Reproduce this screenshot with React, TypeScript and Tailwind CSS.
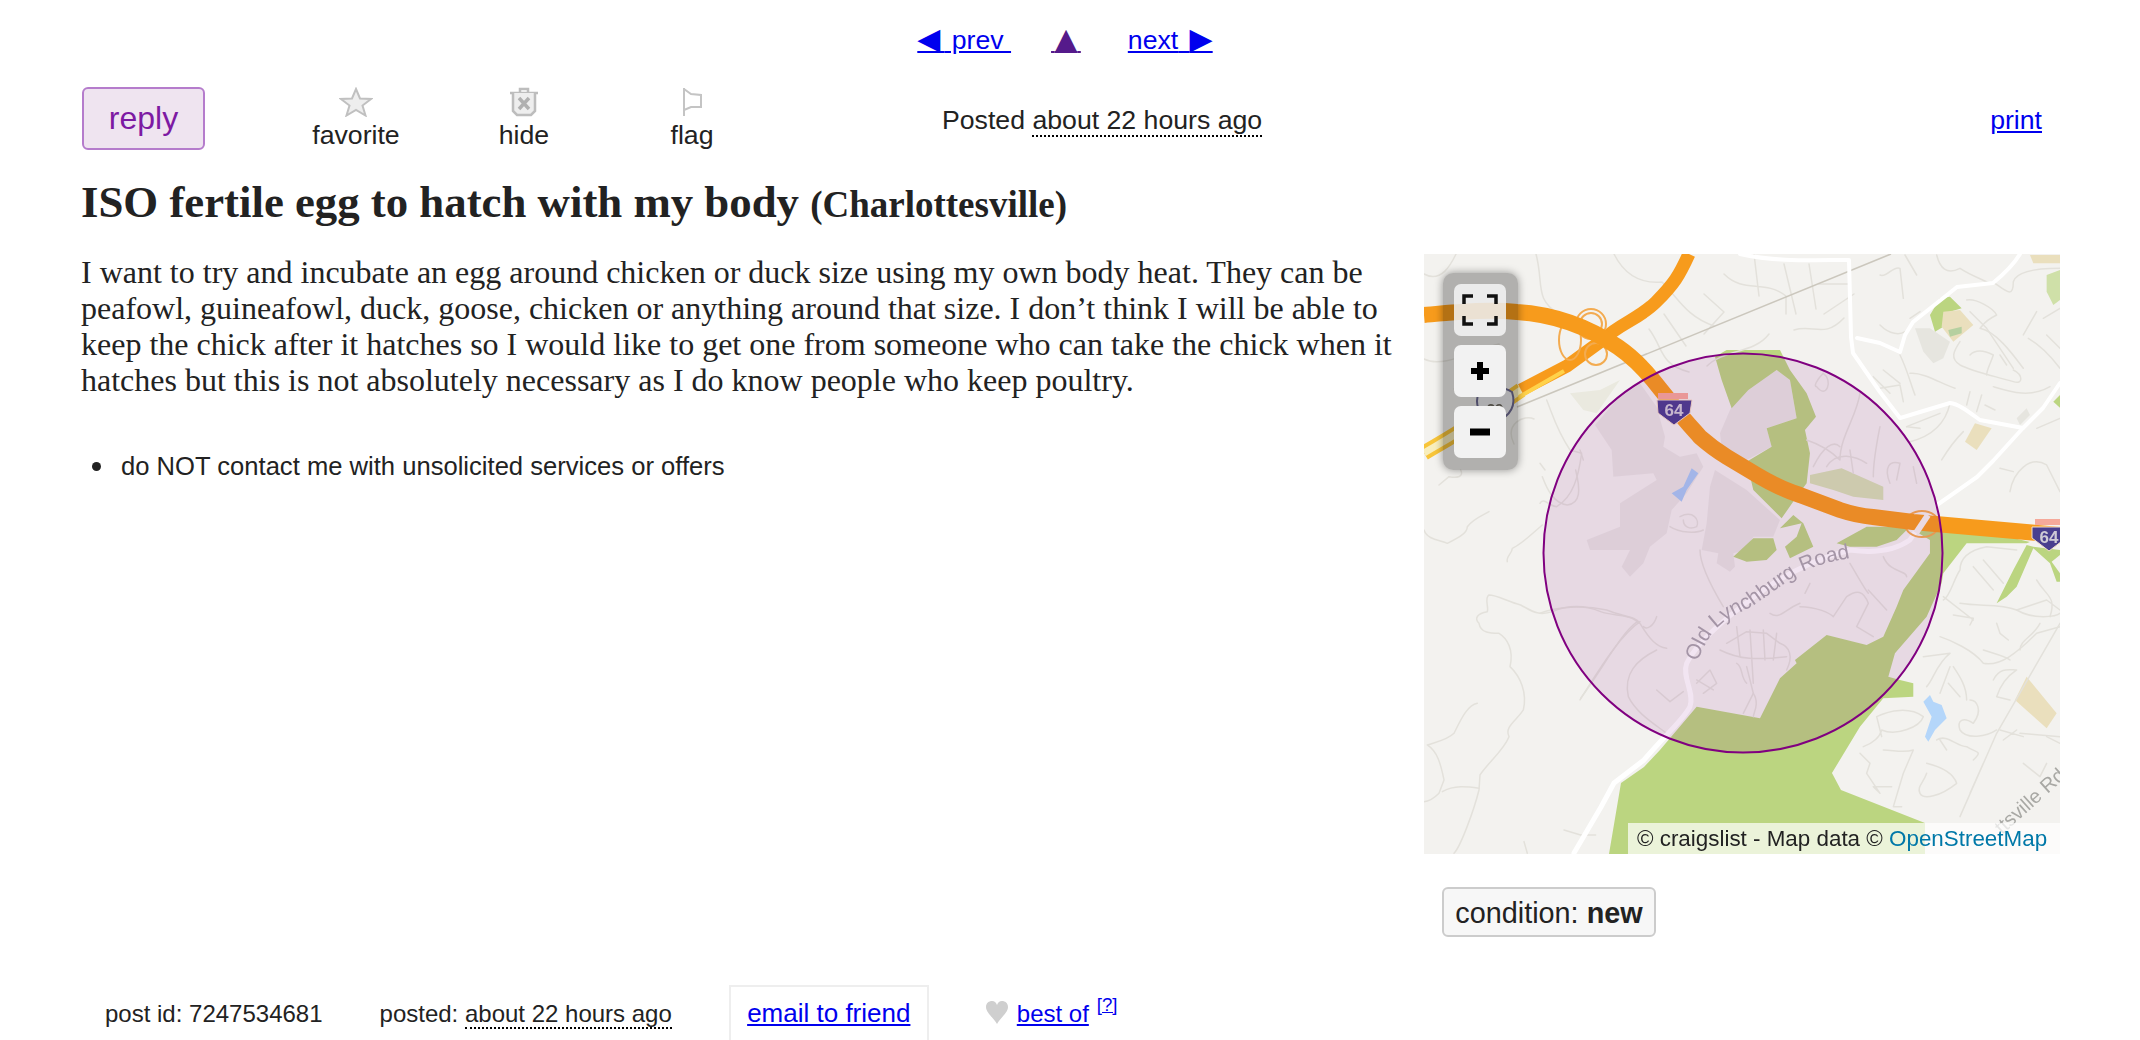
// map drawing: each block of points is traced at 3x, so the groups scale back down by a third
const roadsCentre = [
  'M0 790 C50 770 130 765 200 780 C250 800 290 800 300 820 C330 870 350 890 380 895',
  'M300 815 C250 850 200 920 120 1050',
  'M350 900 C290 930 250 970 265 1040 C290 1090 340 1120 380 1150',
  'M350 1020 L390 1055 L430 1025',
  'M350 800 C340 830 320 840 310 830',
  'M480 600 C480 650 520 720 550 770',
  'M560 880 L620 845 L680 850 L720 880 C750 890 760 920 740 960',
  'M540 900 C600 930 650 930 740 920 M590 830 L600 920 M630 840 L640 1000 M670 840 L675 930 M710 850 L700 930 M620 950 L640 1030 L610 1090 M590 940 C610 950 600 980 620 1000',
  'M470 1000 L510 960 L530 1000 L490 1030 M520 1020 L470 990',
  'M640 1030 C660 1060 640 1090 640 1100',
  'M780 770 C830 770 870 790 880 800 L920 740 C950 720 970 720 985 760 L950 830 L1000 860 M985 720 L1040 780',
  'M930 640 C960 690 970 710 985 730',
  'M690 790 C720 810 730 780 780 760 M810 700 L795 730',
  'M1030 620 C1050 670 1100 660 1100 680',
  'M830 110 C860 150 880 90 850 70 C830 90 820 110 830 110',
  'M960 130 C950 200 900 260 900 330 C870 300 830 280 800 270',
  'M860 350 C890 300 950 320 980 340',
  'M1020 230 C1010 280 1000 340 1000 380',
  'M1050 400 C1030 350 1050 330 1080 340 L1070 390',
  'M1120 350 L1130 400 M940 370 L930 300',
  'M820 350 C850 290 880 270 900 290',
  'M1000 80 L1050 130 M1030 60 L1080 100 M1100 230 L1200 190',
  'M20 150 C40 200 50 240 90 300 L125 310 C115 380 100 440 50 470 C30 470 10 440 0 460',
  'M0 340 L15 360 M120 300 L130 330',
  'M420 500 C460 480 480 510 470 530 C450 540 430 530 430 510',
  'M390 530 C420 550 470 550 490 540',
]

const roadsNorthEast = [
  'M0 60 C20 70 40 30 60 40 L70 130',
  'M75 0 L110 60',
  'M170 0 C180 40 200 60 240 40 C270 60 300 70 330 85',
  'M345 85 C380 110 400 130 400 80 C410 50 470 40 540 40',
  'M260 135 C290 130 340 160 350 180 C310 200 310 210 300 220 C350 230 400 300 430 340',
  'M270 170 L320 220 L400 340',
  'M240 260 C220 290 210 310 240 330 C280 350 330 360 400 380 C430 390 430 360 400 345',
  'M270 300 C290 280 320 290 340 300 C330 330 320 345 320 360 M360 300 L380 330',
  'M340 395 C390 410 450 430 510 395',
  'M90 190 L120 170 M0 210 C30 240 60 240 75 230',
  'M60 300 C80 340 90 380 105 420 M90 355 C130 350 190 390 225 400',
  'M0 400 L60 390 L70 440',
  'M270 410 L260 450 M305 420 L290 470 M315 450 L345 465',
  'M210 445 C200 490 170 540 90 560 M80 515 L120 520',
  'M250 530 C220 560 200 590 185 615',
  'M445 250 C480 270 510 300 540 340 M430 240 L470 170 M490 190 L540 160 M500 240 L540 280',
  'M470 520 L540 490',
  'M390 710 C400 650 450 600 500 630 L540 710 M360 640 L400 650',
]

const roadsSouthEast = [
  'M250 180 C270 170 280 120 300 90 C300 50 330 30 380 20 L470 30',
  'M340 80 L400 150 M370 60 L430 130',
  'M250 170 L340 240 M280 225 L340 235 L330 255',
  'M300 190 C360 200 420 190 470 210 C520 240 590 230 600 220',
  'M410 250 L420 280 L445 300',
  'M240 290 C270 300 340 330 370 370 C420 380 470 340 530 280 L600 260',
  'M190 350 L270 340 C230 370 220 420 200 440',
  'M280 380 C300 410 320 440 320 480 M240 460 L270 380 M265 430 L300 470',
  'M370 330 C400 340 440 350 450 360',
  'M400 420 C420 380 450 390 470 390 C440 410 420 440 410 470 L450 480',
  'M330 480 C350 480 370 510 340 550 C310 530 290 540 300 570 C320 600 380 590 410 570',
  'M230 600 C260 580 290 620 320 620 C350 640 370 630 340 660 M260 630 L240 600',
  'M10 620 C40 610 60 590 65 570 C110 590 180 560 190 530 C150 500 90 510 50 530 L65 590',
  'M70 630 C100 630 130 640 160 630 L130 700 L100 800 L125 800',
  'M0 640 L30 670 L20 700 L60 760 L40 740 L95 740',
  'M200 670 C240 680 280 700 290 730 C240 770 190 780 180 760 C170 740 190 730 200 700',
  'M480 580 L600 590 M420 570 L490 590 M430 600 L470 570',
  'M300 830 L410 580 L600 250 M330 760 L370 670',
  'M490 670 L540 710 L560 670',
  'M540 250 C520 290 480 300 480 330',
  'M560 590 L600 610',
  'M530 120 C560 170 590 170 570 230 M470 210 L560 180 L600 210',
]

const roadsWest = [
  'M0 180 C10 210 50 210 70 220 C100 205 130 190 130 170 C150 145 170 140 195 125',
  'M250 275 C245 260 265 250 265 235 C290 225 320 195 355 165',
  'M385 425 C340 440 320 420 290 405 C250 395 220 375 195 375 C180 385 195 410 190 425 C160 430 150 445 165 460 C170 490 200 490 225 490 C250 505 270 540 258 590 C290 620 310 670 298 720 C280 750 240 770 255 800 C240 840 190 880 168 915 L165 960 C150 1020 110 1130 90 1150',
  'M160 700 C130 705 110 750 90 790 C70 810 40 815 10 825 C40 845 50 880 60 930 L45 970 C25 990 10 995 0 995',
  'M55 965 C90 945 130 950 165 955',
  'M420 1080 L470 1095 L515 1095 M300 1115 L310 1150',
  'M385 425 C420 410 470 400 530 425 C570 440 620 430 645 460',
  'M640 455 C590 490 540 590 470 685',
  'M355 20 C370 60 390 100 430 105 C470 100 470 60 455 0',
  'M45 45 L75 20 C100 25 120 20 110 0',
]

const roadsNorth = [
  'M0 105 C20 115 50 95 75 90 C80 110 60 130 30 135',
  'M0 20 C18 30 28 8 32 0',
  'M112 0 C120 30 110 45 135 60',
  'M190 0 C200 20 215 30 238 28 C255 45 262 62 290 72',
  'M225 75 C240 95 235 110 265 118',
  'M240 60 L262 92 M280 40 L300 58 L280 80',
  'M300 20 C320 40 340 25 362 42 L362 60 M330 0 L335 42 M360 10 L372 60 M385 10 L392 55',
  'M283 112 C300 95 330 100 345 80 M370 76 C390 70 400 85 420 64',
  'M90 190 C80 170 100 160 110 165',
  'M400 60 L430 40 M395 30 L425 30',
]

const builtUp = [
  '165,225 230,150 300,100 350,170 375,260 370,290 420,320 470,310 490,350 440,430 395,480 380,550 330,590 310,640 270,680 245,650 270,600 150,600 140,570 240,530 240,460 350,390 340,370 220,380 215,300',
  '600,130 710,60 750,90 770,205 680,235 695,290 620,330 545,290 540,250 570,180',
  '525,360 620,420 720,510 700,560 640,560 620,600 580,610 585,650 570,665 530,640 535,610 485,600 500,520 510,410',
]

const mainPark =
  '207,1512 243,1299 312,1251 360,1200 470,1070 660,1105 720,985 770,940 765,930 860,855 980,885 1030,860 1070,770 1090,720 1170,610 1170,570 1120,540 1280,530 1470,576 1460,580 1280,580 1210,670 1205,700 1160,800 1065,910 1045,980 1080,990 1120,1000 1120,1040 1030,1045 960,1130 876,1269 903,1320 1155,1419 1155,1512'

function MapDrawing() {
  return (
    <svg viewBox="0 0 636 600" className="block w-[636px] h-[600px]" aria-hidden="true">
      <rect width="636" height="600" fill="#f3f2ef" />

      <g className="blur-[0.6px]">
        <g transform="translate(116 96) scale(0.3333)">
          <polygon points="90,130 180,120 240,90 170,190 130,180" fill="#eae9df" />
          {builtUp.map((p) => (
            <polygon key={p} points={p} fill="#e8e6e3" />
          ))}
          <g fill="#bbd580">
            <polygon points={mainPark} />
            <polygon points="525,20 560,0 720,0 750,60 800,130 828,200 795,240 810,310 800,400 770,440 725,505 640,420 620,335 695,290 680,235 770,205 750,90 710,60 625,120 575,175 545,90" />
            <polygon points="580,620 640,565 700,565 710,600 680,630 620,635" />
            <polygon points="720,535 760,495 790,520 820,590 750,625 735,590 770,560 785,520 740,530" />
            <polygon points="890,580 980,530 1110,530 1070,570 1010,590 930,590" />
          </g>
          <polygon points="810,375 905,355 1030,410 1030,450 940,440 880,420 810,400" fill="#d6e1b4" />
          <polygon points="455,355 475,370 440,420 425,455 395,430 430,410" fill="#a8caf4" />
        </g>

        {/* north east lots */}
        <g transform="translate(456 1) scale(0.3333)">
          <polygon points="105,220 150,220 210,260 190,310 160,325 130,290" fill="#e6e5df" />
          <polygon points="410,490 440,460 450,480 420,510" fill="#e6e5df" />
          <polygon points="180,130 210,125 245,160 210,170 190,215 165,230 150,180" fill="#bbd580" />
          <polygon points="190,170 240,165 280,210 220,260 185,215" fill="#eadfbd" />
          <polygon points="205,225 245,215 245,235 210,245" fill="#b5d0a0" />
          <polygon points="450,0 540,0 540,25 460,25" fill="#eadfbd" />
          <polygon points="500,60 540,45 540,135 520,150 500,110" fill="#cfe0a8" />
          <polygon points="520,440 540,420 540,458" fill="#bbd580" />
          <polygon points="285,505 335,520 290,585 255,560" fill="#eadfbd" />
        </g>

        {/* south east lots */}
        <g transform="translate(436 286) scale(0.3333)">
          <polygon points="500,15 460,90 410,190 440,170 470,140 520,25 570,70 590,125 600,125 600,100 575,65 600,45 600,30 520,20" fill="#bbd580" />
          <polygon points="500,410 590,520 560,565 465,480" fill="#eadfbd" />
          <polygon points="210,465 220,485 245,495 260,535 225,570 205,605 195,590 215,530 190,485" fill="#b4d6fa" />
        </g>

        {/* small streets */}
        <g fill="none" stroke="#e3e1db" strokeLinecap="round" strokeLinejoin="round">
          <g strokeWidth="1.5">
            {roadsNorth.map((d) => (
              <path key={d} d={d} />
            ))}
          </g>
          <g strokeWidth="4.5" transform="translate(116 96) scale(0.3333)">
            {roadsCentre.map((d) => (
              <path key={d} d={d} />
            ))}
          </g>
          <g strokeWidth="4.5" transform="translate(456 1) scale(0.3333)">
            {roadsNorthEast.map((d) => (
              <path key={d} d={d} />
            ))}
          </g>
          <g strokeWidth="4.5" transform="translate(436 286) scale(0.3333)">
            {roadsSouthEast.map((d) => (
              <path key={d} d={d} />
            ))}
          </g>
          <g strokeWidth="4.5" transform="translate(0 216) scale(0.3333)">
            {roadsWest.map((d) => (
              <path key={d} d={d} />
            ))}
          </g>
        </g>

        <path d="M467 0 L93 153" fill="none" stroke="#cbc7bd" strokeWidth="1.5" />

        {/* white roads */}
        <g fill="none" stroke="#ffffff" strokeLinecap="round" strokeLinejoin="round" strokeWidth="4">
          <path d="M316 0 C350 8 390 6 425 6 L427 83 L429 99 L456 138 L476 164 L496 158 L526 149 C535 150 545 158 556 166 L599 174" />
          <path d="M636 129 L619 154 L599 174 L569 207 L553 223 L513 251" />
          <path d="M433 84 L456 89 L476 98 L481 81 L489 68 L523 41 L533 33 L569 29 C580 20 590 10 596 0" />
          <path strokeWidth="15" transform="translate(116 96) scale(0.3333)" d="M1150 510 L1110 570 C1060 605 1000 610 930 600 C850 620 780 650 700 700 C600 770 480 860 440 940 C425 980 465 1030 450 1070 C430 1110 380 1150 312 1230 L222 1299 L183 1371 L102 1509" />
        </g>

        {/* motorway ramp and route 29 */}
        <path d="M97 136 L55 165 C30 182 15 190 0 199" fill="none" stroke="#f8c53a" strokeWidth="15" />
        <path d="M97 136 L55 165 C30 182 15 190 0 199" fill="none" stroke="#f8eebd" strokeWidth="7" />
        <path d="M265 0 C255 22 250 30 232 48 C215 65 195 70 180 85 L143 112 L97 136" fill="none" stroke="#f79b1c" strokeWidth="13" />
        <path d="M95 143 L140 117" fill="none" stroke="#ffd24a" strokeWidth="4" />
        <g fill="none" stroke="#f3ab50" strokeWidth="2">
          <circle cx="167" cy="70" r="11" />
          <circle cx="167" cy="70" r="15" />
          <circle cx="172" cy="100" r="11" />
          <ellipse cx="146" cy="86" rx="11" ry="20" />
          <ellipse cx="498" cy="270" rx="17" ry="13" />
        </g>
        <path d="M0 61 C35 58 65 55 93 58 C125 60 160 70 194 93 C210 104 220 115 229 126 L253 156 C262 168 270 176 276 183 C285 191 295 198 303 203 L333 221 C350 231 360 236 376 241 L416 256 C428 260 438 262 449 263 L489 268 L636 281" fill="none" stroke="#f79b1c" strokeWidth="16" />
        <path d="M492 279 L504 261" stroke="#f7f3ee" strokeWidth="6" />

        {/* route shields */}
        <g fontFamily="Liberation Sans, sans-serif" fontWeight="700" textAnchor="middle">
          <path d="M233 146 H268 L266 159 L250 171 L234 159 Z" fill="#4a3f8f" stroke="#f2ddc8" strokeWidth="1" />
          <rect x="234" y="139" width="30" height="6" fill="#f5a99a" />
          <text x="250" y="162" fontSize="17" fill="#cfcbd6">64</text>
          <path d="M608 273 H642 V284 L625 297 L608 284 Z" fill="#4a3f8f" stroke="#f2ddc8" strokeWidth="1" />
          <rect x="611" y="265" width="30" height="6" fill="#f5a99a" />
          <text x="625" y="289" fontSize="17" fill="#cfcbd6">64</text>
          <path d="M55 138 C62 132 80 132 88 138 C92 150 88 162 71 168 C54 162 50 150 55 138 Z" fill="#eeeef0" stroke="#6d6a92" strokeWidth="2" />
          <text x="71" y="160" fontSize="15" fill="#6e6a60">29</text>
        </g>

        {/* road labels */}
        <path id="lynchburg" d="M273 408 C280 392 285 382 293 374 C305 362 320 358 333 349 C350 337 362 328 376 319 C395 310 410 307 426 304" fill="none" />
        <text fontFamily="Liberation Sans, sans-serif" fontSize="21" fill="#a9a6ab">
          <textPath href="#lynchburg">Old Lynchburg Road</textPath>
        </text>
        <text x="578" y="581" fontFamily="Liberation Sans, sans-serif" fontSize="20" fill="#a8a8a4" transform="rotate(-42 578 581)">
          ttsville Rd
        </text>
      </g>

      {/* search radius */}
      <circle cx="319" cy="299" r="199.5" fill="#800080" fillOpacity="0.1" stroke="#800080" strokeWidth="2" />
    </svg>
  )
}

function PostMap() {
  return (
    <div className="relative w-[636px] h-[600px] overflow-hidden">
      <MapDrawing />
      <div className="absolute left-[19px] top-[19px] w-[75px] h-[197px] rounded-[10px] bg-black/27 shadow-[0_0_8px_rgba(0,0,0,0.4)] pt-[11px] pl-[11px] flex flex-col gap-[9px]">
        <div className="w-[52px] h-[52px] rounded-[7px] bg-[#f4f4f4]/85 flex items-center justify-center">
          <svg width="36" height="32" viewBox="0 0 36 32" fill="none" stroke="#111" strokeWidth="3.5" aria-hidden="true">
            <path d="M2 10V2H11M25 2H34V10M34 22V30H25M11 30H2V22" />
          </svg>
        </div>
        <div className="w-[52px] h-[52px] rounded-[7px] bg-[#f2f2f2] flex items-center justify-center">
          <svg width="20" height="20" viewBox="0 0 20 20" fill="#000" aria-hidden="true">
            <path d="M7 1H13V7H19V13H13V19H7V13H1V7H7Z" />
          </svg>
        </div>
        <div className="w-[52px] h-[52px] rounded-[7px] bg-[#f2f2f2] flex items-center justify-center">
          <svg width="20" height="8" viewBox="0 0 20 8" fill="#000" aria-hidden="true">
            <rect width="20" height="7" y="0.5" />
          </svg>
        </div>
      </div>
      <div className="absolute right-0 bottom-0 w-[432px] h-[31px] bg-white/70 pl-[9px] text-[22.4px] leading-[31px] text-[#222] whitespace-nowrap">
        © craigslist - Map data © <a href="#" className="text-[#0078a8]">OpenStreetMap</a>
      </div>
    </div>
  )
}

function ActionIcon({ label, children }: { label: string; children: React.ReactNode }) {
  return (
    <div className="w-[168px] flex flex-col items-center">
      <div className="h-[32px] pb-[3px] flex items-end">{children}</div>
      <span className="leading-[30px] text-[#222]">{label}</span>
    </div>
  )
}

export default function App() {
  return (
    <div className="h-[1040px] overflow-hidden bg-white text-[26.67px] text-[#222] [font-family:'Liberation_Sans',sans-serif]">
      {/* prev / up / next */}
      <nav className="pt-[23px] h-[86px] flex justify-center gap-[40px] leading-[34px] pr-[10px] whitespace-pre">
        <a href="#" className="text-[#0000ee] underline"><span className="font-['DejaVu_Sans'] text-[30px] leading-none tracking-[4px]">◀</span> prev </a>
        <a href="#" className="text-[#551a8b] underline"><span className="text-[12px]"> </span><span className="font-['DejaVu_Sans'] text-[30px] leading-none">▲</span><span className="text-[12px]"> </span></a>
        <a href="#" className="ml-[7px] text-[#0000ee] underline">next<span className="tracking-[4px]"> </span><span className="font-['DejaVu_Sans'] text-[30px] leading-none">▶</span></a>
      </nav>

      <div className="pl-[82px] pr-[98px] flex items-center h-[64px]">
        <a href="#" className="w-[123px] h-[63px] rounded-[6px] border-2 border-[#b57ccc] bg-[#efe4f0] text-[#7d1aa3] text-[32px] flex items-center justify-center">
          reply
        </a>
        <div className="flex ml-[67px] mt-[2px]">
          <ActionIcon label="favorite">
            <svg width="34" height="30" viewBox="0 0 34 30" fill="#eeeeee" stroke="#c0c0c0" strokeWidth="2" aria-hidden="true">
              <path d="M17 2 L21 11.5 L32 12 L23.5 18.5 L26.5 28.5 L17 23 L7.5 28.5 L10.5 18.5 L2 12 L13 11.5 Z" />
            </svg>
          </ActionIcon>
          <ActionIcon label="hide">
            <svg width="30" height="30" viewBox="0 0 30 30" fill="#eeeeee" stroke="#bdbdbd" strokeWidth="2.5" aria-hidden="true">
              <path d="M1 6H29M11 6V2H19V6" fill="none" />
              <path d="M4 6V24L8 28H22L26 24V6" />
              <path d="M10 11L20 22M20 11L10 22" strokeWidth="3.5" stroke="#b0b0b0" />
            </svg>
          </ActionIcon>
          <ActionIcon label="flag">
            <svg width="22" height="30" viewBox="0 0 22 30" fill="none" stroke="#c4c4c4" strokeWidth="2" aria-hidden="true">
              <path d="M3 1V29M3 2L10 7L20 8V20L10 20L3 23" />
            </svg>
          </ActionIcon>
        </div>
        <p className="ml-[166px] mt-[4px] whitespace-nowrap">
          Posted <span className="border-b-2 border-dotted border-black">about 22 hours ago</span>
        </p>
        <a href="#" className="ml-auto mt-[4px] text-[#0000ee] underline">print</a>
      </div>

      <h1 className="pl-[81px] mt-[27px] font-['Liberation_Serif',serif] font-bold text-[44.8px] leading-[50px] text-[#222] whitespace-nowrap">
        ISO fertile egg to hatch with my body <small className="text-[37px]">(Charlottesville)</small>
      </h1>

      <div className="flex pl-[81px] mt-[24px]">
        <div className="w-[1343px]">
          <p className="font-['Liberation_Serif',serif] text-[32px] leading-[36px] text-[#222] w-[1320px]">
            I want to try and incubate an egg around chicken or duck size using my own body heat. They can be peafowl, guineafowl, duck, goose, chicken or anything around that size. I don’t think I will be able to keep the chick after it hatches so I would like to get one from someone who can take the chick when it hatches but this is not absolutely necessary as I do know people who keep poultry.
          </p>
          <ul className="pl-[11px] mt-[52px] text-[25.6px] leading-[32px]">
            <li className="flex items-center gap-[20px]">
              <span className="w-[9px] h-[9px] rounded-full bg-[#222]" />
              do NOT contact me with unsolicited services or offers
            </li>
          </ul>
        </div>
        <div className="w-[636px]">
          <PostMap />
          <div className="ml-[18px] mt-[33px] w-[214px] h-[50px] pt-[3px] rounded-[6px] border-2 border-[#ccc] bg-[#f7f7f7] flex items-center justify-center text-[28.8px]">
            <span>condition: <b className="font-bold">new</b></span>
          </div>
        </div>
      </div>

      {/* footer */}
      <div className="flex items-start pl-[105px] mt-[48px] text-[24px]">
        <span className="mt-[11px]">post id: 7247534681</span>
        <span className="ml-[57px] mt-[11px]">posted: <span className="border-b-2 border-dotted border-black">about 22 hours ago</span></span>
        <div className="ml-[57px] w-[200px] h-[60px] border-2 border-[#eee] flex justify-center pt-[7px] text-[26px]">
          <a href="#" className="text-[#0000ee] underline">email to friend</a>
        </div>
        <svg className="ml-[57px] mt-[16px]" width="22" height="23" viewBox="0 0 22 23" fill="#cfcfcf" aria-hidden="true">
          <path d="M11 23 C8 17 0 12 0 6 C0 2 3 0 6 0 C8.500 0 10 1.500 11 4 C12 1.500 13.500 0 16 0 C19 0 22 2 22 6 C22 12 14 17 11 23 Z" />
        </svg>
        <a href="#" className="ml-[9px] mt-[11px] text-[#0000ee] underline">best of</a>
        <a href="#" className="ml-[8px] mt-[6px] text-[#0000ee] text-[18.6px]"><span className="underline">[?]</span></a>
      </div>
    </div>
  )
}
